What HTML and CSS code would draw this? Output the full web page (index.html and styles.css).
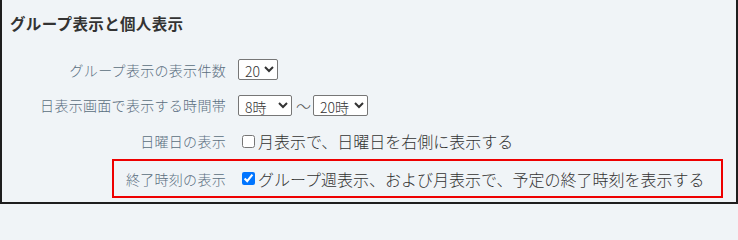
FILE: index.html
```html
<!DOCTYPE html>
<html lang="ja">
<head>
<meta charset="utf-8">
<link rel="stylesheet" href="styles.css">
</head>
<body>
<div class="panel">
  <h2 class="heading">グループ表示と個人表示</h2>
  <div class="rows">
    <div class="row r1">
      <div class="label">グループ表示の表示件数</div>
      <div class="value">
        <select class="sel sel-count"><option>20</option></select>
      </div>
    </div>
    <div class="row r2">
      <div class="label">日表示画面で表示する時間帯</div>
      <div class="value">
        <select class="sel sel-time"><option>8時</option></select>
        <span class="tilde">～</span><select class="sel sel-time2"><option>20時</option></select>
      </div>
    </div>
    <div class="row r3">
      <div class="label">日曜日の表示</div>
      <label class="value check"><input type="checkbox" class="cb">月表示で、日曜日を右側に表示する</label>
    </div>
    <div class="row r4 highlight">
      <div class="label">終了時刻の表示</div>
      <label class="value check"><input type="checkbox" class="cb" checked>グループ週表示、および月表示で、予定の終了時刻を表示する</label>
    </div>
  </div>
</div>
</body>
</html>
```

FILE: styles.css
```css
* { box-sizing: border-box; }
html, body { margin: 0; padding: 0; background: #f0f4f7; }
body {
  font-family: "Noto Sans CJK JP", "Noto Sans", sans-serif;
}
.panel {
  width: 738px;
  height: 204px;
  background: #f0f4f7;
  border-left: 2px solid #1e1e1e;
  border-right: 2px solid #1e1e1e;
  border-bottom: 2px solid #1e1e1e;
  padding-top: 11px;
}
.heading {
  margin: 0 0 0 8px;
  font-size: 15.5px;
  line-height: 24px;
  font-weight: bold;
  color: #333;
  letter-spacing: 0.35px;
}
.rows {
  margin-top: 18px;
}
.row {
  display: flex;
  align-items: center;
  border: 2px solid transparent;
}
.r1 { height: 34px; }
.r2 { height: 36px; }
.r3 { height: 36px; }
.r4 { height: 39px; }
.label {
  width: 222px;
  flex: none;
  text-align: right;
  font-size: 14px;
  font-weight: 300;
  color: #5a6e80;
  white-space: nowrap;
  letter-spacing: 0.3px;
}
.highlight {
  margin-left: 110px;
  width: 611px;
  border-color: #ee0000;
}
.highlight .label { width: 112px; }
.value {
  margin-left: 12px;
  display: flex;
  align-items: center;
  font-size: 16px;
  font-weight: 300;
  color: #333;
  white-space: nowrap;
}
.sel {
  font-family: "Noto Sans CJK JP", "Noto Sans", sans-serif;
  font-size: 14px;
  font-weight: 300;
  height: 21px;
  padding: 0 0 0 2px;
  border: 1px solid #767676;
  border-radius: 2px;
  background: #fff;
  color: #333;
}
.sel-count { width: 40px; margin-top: -2px; }
.sel-time { width: 54px; }
.sel-time2 { width: 55px; }
.tilde {
  font-size: 15px;
  color: #555;
  margin: 0 0 0 4px;
  width: 17px;
}
.check .cb {
  margin: 0 3px 0 4px;
  width: 13px;
  height: 13px;
}
```
